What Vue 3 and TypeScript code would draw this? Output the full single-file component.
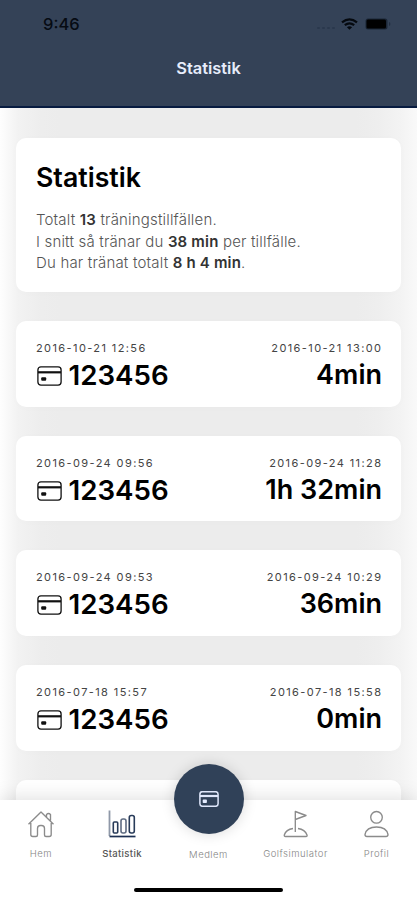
<script setup lang="ts">
interface Session {
  start: string
  card: string
  end: string
  duration: string
}

interface Tab {
  id: string
  label: string
}

const sessions: Session[] = [
  { start: '2016-10-21 12:56', card: '123456', end: '2016-10-21 13:00', duration: '4min' },
  { start: '2016-09-24 09:56', card: '123456', end: '2016-09-24 11:28', duration: '1h 32min' },
  { start: '2016-09-24 09:53', card: '123456', end: '2016-09-24 10:29', duration: '36min' },
  { start: '2016-07-18 15:57', card: '123456', end: '2016-07-18 15:58', duration: '0min' },
]

const tabs: Tab[] = [
  { id: 'home', label: 'Hem' },
  { id: 'stats', label: 'Statistik' },
  { id: 'member', label: 'Medlem' },
  { id: 'golf', label: 'Golfsimulator' },
  { id: 'profile', label: 'Profil' },
]
</script>

<template>
  <div class="screen">
    <header class="header">
      <div class="status">
        <span class="time">9:46</span>
        <div class="indicators">
          <span class="dots"><i v-for="n in 4" :key="n"></i></span>
          <svg class="wifi" viewBox="0 0 17 12" fill="none" stroke="#05090f" stroke-width="2.2">
            <path d="M1 4.4Q8.500-1.800 16 4.400" />
            <path d="M3.800 7.200Q8.500 3.400 13.200 7.200" />
            <path d="M8.500 11.800L5.900 9.200Q8.500 7.300 11.100 9.200Z" fill="#05090f" stroke="none" />
          </svg>
          <svg class="battery" viewBox="0 0 26 12">
            <rect x="0.500" y="0.500" width="22" height="11" rx="2.500" fill="#1b2636" />
            <rect x="1.500" y="1.500" width="19.500" height="9" rx="1.500" fill="#000" />
            <path d="M24 4v4q1.400-.5 1.400-2T24 4z" fill="#222e40" />
          </svg>
        </div>
      </div>
      <div class="title">Statistik</div>
    </header>

    <main class="content">
      <section class="card summary">
        <h1>Statistik</h1>
        <p>Totalt <b>13</b> träningstillfällen.</p>
        <p>I snitt så tränar du <b>38 min</b> per tillfälle.</p>
        <p>Du har tränat totalt <b>8 h 4 min</b>.</p>
      </section>

      <section v-for="s in sessions" :key="s.start" class="card session">
        <div class="side">
          <span class="date">{{ s.start }}</span>
          <span class="value">
            <svg class="card-icon" viewBox="0 0 25 20" fill="none" stroke="#111">
              <rect x="0.900" y="0.900" width="23.200" height="18.200" rx="3" stroke-width="1.300" />
              <path d="M1 6.300h23" stroke-width="2.200" />
              <rect x="4.200" y="11.200" width="5" height="3.600" rx="1" fill="#111" stroke="none" />
            </svg>
            {{ s.card }}
          </span>
        </div>
        <div class="side end">
          <span class="date">{{ s.end }}</span>
          <span class="value">{{ s.duration }}</span>
        </div>
      </section>
      <section class="card session"></section>
    </main>

    <nav class="tabbar">
      <div v-for="t in tabs" :key="t.id" class="tab" :class="t.id">
        <svg v-if="t.id === 'home'" class="icon" viewBox="0 0 28 28">
          <path d="M1.500 14.300L14 2l12.500 12.300M19.500 7V4.500Q21.500 2.500 23.500 4.500V10.500M3.800 13v11.500q0 2 2 2h3.200q1.500 0 1.500-1.500v-6.500q0-3 3-3h1q3 0 3 3v6.500q0 1.500 1.500 1.500h3.200q2 0 2-2V13" />
        </svg>
        <svg v-else-if="t.id === 'stats'" class="icon" viewBox="0 0 28 28">
          <path d="M1.500 0.500V26" stroke="#8f98a8" stroke-width="1.800" />
          <path d="M1.500 26.500h26" stroke="#1c2f52" stroke-width="1.700" />
          <g stroke="#283b59" stroke-width="1.600">
            <rect x="5.300" y="12" width="4.400" height="11" rx="1" />
            <rect x="13" y="9" width="5" height="14" rx="2" stroke="#5f6c82" />
            <rect x="21.300" y="5.500" width="5" height="17.500" rx="2" />
          </g>
        </svg>
        <div v-else-if="t.id === 'member'" class="fab">
          <svg viewBox="0 0 20 16" fill="none" stroke="#dfe7fb">
            <rect x="0.900" y="0.700" width="18.200" height="14.600" rx="2.500" stroke-width="1.500" />
            <path d="M1 5h18" stroke-width="2.200" />
            <rect x="3.700" y="8.600" width="4.200" height="3.400" rx="0.800" fill="#e4ecff" stroke="none" />
          </svg>
        </div>
        <svg v-else-if="t.id === 'golf'" class="icon" viewBox="0 0 28 28">
          <path d="M13.300 22V1.500L24 5.500L13.300 9.500M11 18.500Q4 19.300 2.300 25Q2 26.500 3.500 26.500H24Q25.500 26.500 25 25Q23 19.300 16 18.500" />
        </svg>
        <svg v-else class="icon" viewBox="0 0 28 28">
          <circle cx="13.500" cy="7.300" r="5.800" />
          <path d="M2 24.500Q3.500 17 13.500 17T25 24.500Q25 26.500 23 26.500H4Q2 26.500 2 24.500Z" />
        </svg>
        <span class="label">{{ t.label }}</span>
      </div>
      <div class="home-indicator"></div>
    </nav>
  </div>
</template>

<style>
body {
  margin: 0;
  overflow: hidden;
}
</style>

<style scoped>
.screen {
  position: relative;
  height: 900px;
  overflow: hidden;
  background: #fff;
  font-family: Inter, "Liberation Sans", sans-serif;
  color: #000;
}
.header {
  position: relative;
  z-index: 1;
  box-sizing: border-box;
  height: 108px;
  background: #344257;
  border-bottom: 2px solid #071b40;
}
.status {
  display: flex;
  justify-content: space-between;
  align-items: center;
  height: 48px;
  padding: 0 26px 0 43px;
}
.time {
  font-size: 16.500px;
  font-weight: 500;
  color: #060b13;
}
.indicators {
  display: flex;
  align-items: center;
}
.dots {
  display: flex;
  gap: 2px;
  margin: 8px 6px 0 0;
}
.dots i {
  width: 3px;
  height: 2px;
  border-radius: 1px;
  background: #2a384d;
}
.wifi {
  width: 17px;
  height: 12px;
  margin-right: 7px;
}
.battery {
  width: 26px;
  height: 12px;
}
.title {
  margin-top: 9px;
  text-align: center;
  font-size: 16.400px;
  line-height: 22px;
  font-weight: 600;
  color: #e7edfb;
}
.content {
  display: flex;
  flex-direction: column;
  box-sizing: border-box;
  height: 792px;
  gap: 29px;
  padding: 30px 16px 0;
  background: linear-gradient(to right, #fefefe 0, #fafafa 6px, #f2f2f2 18px, #ededed 42px, #ececec 60px, #ececec 357px, #eee 377px, #f3f3f3 401px, #f9f9f9 417px);
}
.card {
  box-sizing: border-box;
  flex: none;
  border-radius: 10px;
  background: #fff;
  box-shadow: 0 1px 8px rgba(0, 0, 0, 0.015);
}
.summary {
  height: 154px;
  padding: 22px 20px 0;
}
h1 {
  margin: 0 0 15px;
  font-size: 26.700px;
  line-height: 34px;
  font-weight: 600;
}
p {
  margin: 0;
  font-size: 15px;
  line-height: 21.500px;
  letter-spacing: 0.180px;
  font-weight: 300;
  color: #555;
  white-space: nowrap;
}
p b {
  font-weight: 600;
  color: #333;
}
.session {
  display: flex;
  justify-content: space-between;
  height: 85.660px;
  padding: 20px 20px 0;
}
.side {
  display: flex;
  flex-direction: column;
}
.end {
  align-items: flex-end;
}
.date {
  font-size: 11px;
  line-height: 15px;
  letter-spacing: 1.400px;
  color: #444;
}
.end .date {
  margin-right: -1.400px;
}
.value {
  display: flex;
  align-items: center;
  margin-top: 2px;
  font-size: 27.700px;
  line-height: 34px;
  font-weight: 600;
}
.end .value {
  margin-right: -1px;
  font-size: 27px;
}
.card-icon {
  width: 25px;
  height: 20px;
  margin: 2px 7px 0 0.500px;
}
.tabbar {
  position: absolute;
  z-index: 2;
  left: 0;
  right: 0;
  bottom: 0;
  display: grid;
  grid-template-columns: 82px 80px 93px 81px 81px;
  height: 100px;
  background: #fff;
  box-shadow: 0 0 20px rgba(0, 0, 0, 0.15);
}
.tab {
  display: flex;
  flex-direction: column;
  align-items: center;
  padding-top: 10px;
}
.icon {
  flex: none;
  width: 28px;
  height: 28px;
  fill: none;
  stroke: #8b8b8b;
  stroke-width: 1.350;
  stroke-linejoin: round;
}
.label {
  margin-top: 9px;
  font-size: 9.500px;
  line-height: 14px;
  letter-spacing: 0.500px;
  font-weight: 300;
  color: #858585;
}
.stats .label {
  font-weight: 500;
  letter-spacing: 0.350px;
  color: #555;
}
.fab {
  display: flex;
  flex: none;
  align-items: center;
  justify-content: center;
  width: 70px;
  height: 70px;
  margin-top: -46px;
  border-radius: 50%;
  background: #304158;
  box-shadow: 0 0 14px rgba(0, 0, 0, 0.15);
}
.fab svg {
  width: 20px;
  height: 16px;
}
.member .label {
  margin-top: 14px;
}
.home-indicator {
  position: absolute;
  left: 134px;
  bottom: 8px;
  width: 149px;
  height: 4px;
  border-radius: 2px;
  background: #000;
}
</style>
